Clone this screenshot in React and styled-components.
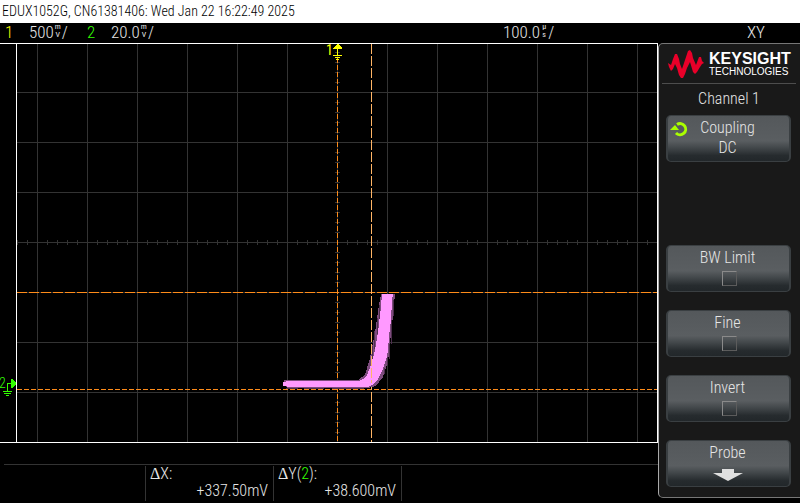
import React from "react";
import styled, { createGlobalStyle } from "styled-components";

const GRID = "#333333";
const AMBER = "#ff8c1a";
const AMBER_LIGHT = "#ffb566";
const TRACE = "#ff99ff";
const YELLOW = "#ffff00";
const GREEN = "#33ff00";

const Global = createGlobalStyle`
  * { box-sizing: border-box; }
  body { margin: 0; background: #000; color: #e6e6e6; font: 300 16px/20px "Roboto Condensed", "Liberation Sans", sans-serif; }
`;

const Screen = styled.div`
  min-height: 100vh;
  display: flex;
  flex-direction: column;
`;

const TitleBar = styled.header`
  height: 23px;
  padding: 0 2px;
  background: #fff;
  color: #000;
  font-size: 14px;
  line-height: 23px;
  white-space: nowrap;
`;

const StatusBar = styled.div`
  display: grid;
  grid-template-columns: 24px 58px 24px 1fr 244px 53px;
  height: 20px;
  padding-left: 5px;
  font-size: 17px;
  line-height: 18px;
`;

const Status = styled.span`
  display: flex;
  color: ${(p) => p.$color || "inherit"};
`;

const Unit = styled.span`
  display: flex;
  flex-direction: column;
  align-items: center;
  width: 8px;
  font-size: 8px;
  font-weight: 400;
  line-height: 8px;
`;

const Main = styled.main`
  flex: 1;
  display: grid;
  grid-template-columns: minmax(0, 1fr) 142px;
`;

const Scope = styled.section`
  display: flex;
  flex-direction: column;
`;

const Plot = styled.svg`
  display: block;
  width: 100%;
  height: auto;
`;

const Readouts = styled.dl`
  display: grid;
  grid-template-columns: 142px 128px 128px;
  margin: 21px 0 0 4px;
  padding-top: 1px;
  border-top: 1px solid ${GRID};
`;

const Readout = styled.div`
  height: 35px;
  padding: 0 5px 0 4px;
  border-right: 1px solid ${GRID};
`;

const Name = styled.dt`
  line-height: 16px;
`;

const Value = styled.dd`
  margin: 0;
  line-height: 18px;
  text-align: right;
`;

const Delta = styled.span`
  font-family: "Liberation Serif", serif;
  font-weight: 400;
`;

const Channel = styled.span`
  color: ${GREEN};
`;

const Menu = styled.aside`
  align-self: start;
  padding: 5px 4px 10px 7px;
  background: #191919;
  border: 1px solid #777;
  border-left-color: #aaa;
  border-right: 0;
  border-radius: 5px 0 0 5px;
`;

const Brand = styled.div`
  display: flex;
  align-items: center;
  gap: 5px;
  height: 29px;
  margin-left: 2px;
  color: #fff;
`;

const BrandName = styled.div`
  display: flex;
  flex-direction: column;
  font: 700 16px/16px "Liberation Sans", sans-serif;
`;

const BrandSub = styled.span`
  font-size: 10px;
  font-weight: 400;
  line-height: 10px;
`;

const MenuTitle = styled.h1`
  margin: 5px 0 0 -4px;
  padding: 6px 0 7px;
  border-top: 1px solid #4d4d4d;
  font-size: 16px;
  font-weight: 300;
  line-height: 18px;
  text-align: center;
`;

const Keys = styled.div`
  display: grid;
  grid-auto-rows: 47px;
  gap: 18px;
  width: 125px;
`;

const Key = styled.button`
  position: relative;
  display: flex;
  flex-direction: column;
  align-items: center;
  gap: 2px;
  width: 100%;
  padding: 3px 2px 0 0;
  border: 1px solid #3a3f42;
  border-left-width: 2px;
  border-right-width: 2px;
  border-radius: 5px;
  background: linear-gradient(#54585b 0, #5a5e61 55%, #43484b 70%, #262b2e 88%, #22272a);
  color: #e6e6e6;
  font: inherit;
  line-height: 18px;
`;

const Gap = styled.span``;

const Check = styled.input`
  appearance: none;
  width: 15px;
  height: 15px;
  margin: 2px 0 0 3px;
  border: 1px solid #8a8a8a;
  border-right-color: #5c5c5c;
  border-bottom-color: #5c5c5c;
`;

const KnobIcon = styled.svg`
  position: absolute;
  left: 2px;
  top: 5px;
`;

const ArrowIcon = styled.svg`
  margin-top: 5px;
`;

const range = (from, to, step) => {
  const out = [];
  for (let v = from; v < to; v += step) out.push(v);
  return out;
};

function Graticule() {
  return (
    <g stroke={GRID} fill="none">
      {range(37, 657, 50).map((x) => <path key={x} d={`M${x}.5 1V399`} />)}
      {range(49, 399, 50).map((y) => <path key={y} d={`M17 ${y}.5H657`} />)}
      {range(17, 657, 10).map((x) => <path key={x} d={`M${x}.5 197v5`} />)}
      {range(9, 399, 10).map((y) => <path key={y} d={`M335 ${y}.5h5`} />)}
    </g>
  );
}

function Waveform() {
  return (
    <g>
      <path fill="#7d4b7d" d="M284 337H358L365 332L370 315L375 289L379 262L381 251H395L393 272L390 300L388 319L383 334L376 343L368 345H287L284 342Z" />
      <path stroke="#4d2e4d" d="M379.5 262v14M377.5 275v16M374.5 288v18M372.5 303v14M393.5 257v16M391.5 277v24M389.5 301v15M387.5 314v8M384.5 325v6M286 345.5h12M304 345.5h20M332 345.5h32" />
      <path fill={TRACE} d="M283 339H286V338H359L363 336L367 332L371 322L375 307L378 289L381 264L382 251H393L392 258L391 277L389 293L388 308L386 317L382 328L378 336L374 341L368 344H287V343H283Z" />
    </g>
  );
}

function ScopePlot() {
  return (
    <Plot viewBox="0 0 658 400" shapeRendering="crispEdges" role="img" aria-label="XY display">
      <Graticule />
      <g fill="none">
        <path stroke={AMBER} strokeDasharray="5 2" d="M337.5 1V399M17 346.5H657" />
        <path stroke={AMBER_LIGHT} strokeDasharray="10 2" d="M371.5 1V399" />
      </g>
      <Waveform />
      <path stroke={AMBER} strokeDasharray="10 2" d="M17 249.5H657" />
      <path stroke={AMBER_LIGHT} strokeDasharray="10 2" d="M371.5 1V340" />
      <path fill="none" stroke="#fff" d="M0 .5H658M16.5 0V400M657.5 0V400M0 399.5H658" />
      <g fill={YELLOW}>
        <path d="M337 1h1l4 4v1h-9v-1ZM337 5h1v7h-1ZM333 12h9v1h-9ZM335 14h5v1h-5ZM336 16h3v1h-3Z" />
        <text x="326" y="12" fontSize="14" fontWeight="400">1</text>
      </g>
      <g fill={GREEN}>
        <path d="M11 336h1l4 4v1l-4 4h-1ZM7 340h5v1h-5ZM7 340h1v9h-1ZM3 348h9v1h-9ZM4 350h7v1h-7ZM6 352h3v1h-3Z" />
        <text x="-1" y="345" fontSize="14">2</text>
      </g>
    </Plot>
  );
}

function Scale({ value, top, bottom }) {
  return (
    <Status>
      {value}
      <Unit><span>{top}</span><span>{bottom}</span></Unit>/
    </Status>
  );
}

function CheckKey({ label }) {
  return (
    <Key as="label">
      {label}
      <Check type="checkbox" />
    </Key>
  );
}

export default function App() {
  return (
    <Screen>
      <Global />
      <TitleBar>EDUX1052G, CN61381406: Wed Jan 22 16:22:49 2025</TitleBar>
      <StatusBar>
        <Status $color={YELLOW}>1</Status>
        <Scale value="500" top="m" bottom="V" />
        <Status $color={GREEN}>2</Status>
        <Scale value="20.0" top="m" bottom="V" />
        <Scale value="100.0" top="µ" bottom="s" />
        <Status>XY</Status>
      </StatusBar>
      <Main>
        <Scope>
          <ScopePlot />
          <Readouts>
            <Readout />
            <Readout>
              <Name><Delta>Δ</Delta>X:</Name>
              <Value>+337.50mV</Value>
            </Readout>
            <Readout>
              <Name><Delta>Δ</Delta>Y(<Channel>2</Channel>):</Name>
              <Value>+38.600mV</Value>
            </Readout>
          </Readouts>
        </Scope>
        <Menu>
          <Brand>
            <svg width="36" height="28" viewBox="0 0 36 28" aria-hidden="true">
              <path fill="#e90029" d="M0 13L3 15L5 9L7 4H9L11 9L12 14L14 19L17 10L20 1L22 0L24 3L25 8L28 15L31 7H33L34 11L36 13L34 14L32 17L29 22L27 24L25 22L22 12L19 18L17 24L15 28H13L11 25L9 18L7 14L5 19L3 21L1 17Z" />
            </svg>
            <BrandName>KEYSIGHT<BrandSub>TECHNOLOGIES</BrandSub></BrandName>
          </Brand>
          <MenuTitle>Channel 1</MenuTitle>
          <Keys>
            <Key type="button">
              <KnobIcon width="18" height="16" viewBox="0 0 18 16" aria-hidden="true">
                <path fill="none" stroke="#aaff00" strokeWidth="3" d="M7 3.5A5.6 5.6 0 1 1 6 12" />
                <path fill="#aaff00" d="M0 9L5 4L9 9Z" />
              </KnobIcon>
              <span>Coupling</span>
              <span>DC</span>
            </Key>
            <Gap />
            <CheckKey label="BW Limit" />
            <CheckKey label="Fine" />
            <CheckKey label="Invert" />
            <Key type="button">
              Probe
              <ArrowIcon width="30" height="12" viewBox="0 0 30 12" aria-hidden="true">
                <path fill="#e0e0e0" d="M9 0H21V4H30L15 12L0 4H9Z" />
              </ArrowIcon>
            </Key>
          </Keys>
        </Menu>
      </Main>
    </Screen>
  );
}
